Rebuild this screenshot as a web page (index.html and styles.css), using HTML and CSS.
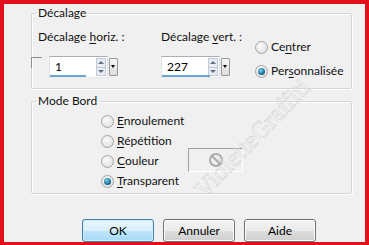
FILE: index.html
```html
<!DOCTYPE html>
<html lang="fr">
<head>
    <meta charset="UTF-8">
    <title>Décalage</title>
    <link rel="stylesheet" href="styles.css">
</head>
<body>
    <div class="dialog">
        <fieldset class="group group-offset">
            <legend>Décalage</legend>
            <div class="offset-row">
                <div class="field field-h">
                    <div class="field-label">Décalage <u>h</u>oriz. :</div>
                    <div class="field-input">
                        <span class="check"></span>
                        <div class="spin">
                            <div class="spin-box">
                                <span class="spin-value">1</span>
                                <span class="arrows"><span class="arrow up"></span><span class="arrow down"></span></span>
                                <span class="level" style="width: 36px"></span>
                            </div>
                            <span class="drop"></span>
                        </div>
                    </div>
                </div>
                <div class="field field-v">
                    <div class="field-label">Décalage <u>v</u>ert. :</div>
                    <div class="field-input">
                        <div class="spin">
                            <div class="spin-box">
                                <span class="spin-value">227</span>
                                <span class="arrows"><span class="arrow up"></span><span class="arrow down"></span></span>
                                <span class="level" style="width: 48px"></span>
                            </div>
                            <span class="drop"></span>
                        </div>
                    </div>
                </div>
                <div class="radios radios-pos">
                    <label class="radio"><span class="dot"></span><span>Ce<u>n</u>trer</span></label>
                    <label class="radio"><span class="dot on"></span><span>Per<u>s</u>onnalisée</span></label>
                </div>
            </div>
        </fieldset>

        <fieldset class="group group-mode">
            <legend>Mode Bord</legend>
            <div class="radios mode-list">
                <label class="radio"><span class="dot"></span><span><u>E</u>nroulement</span></label>
                <label class="radio"><span class="dot"></span><span><u>R</u>épétition</span></label>
                <div class="radio-row">
                    <label class="radio"><span class="dot"></span><span><u>C</u>ouleur</span></label>
                    <span class="swatch">
                        <svg width="18" height="18" viewBox="0 0 18 18">
                            <circle cx="9" cy="9" r="6" fill="none" stroke="#a9a9a9" stroke-width="2"/>
                            <line x1="5" y1="5" x2="13" y2="13" stroke="#a9a9a9" stroke-width="2"/>
                        </svg>
                    </span>
                </div>
                <label class="radio"><span class="dot on"></span><span><u>T</u>ransparent</span></label>
            </div>
        </fieldset>

        <div class="buttons">
            <button class="btn btn-default">OK</button>
            <button class="btn">Annuler</button>
            <button class="btn">Aide</button>
        </div>

        <span class="watermark">VioletteGraffiti</span>
    </div>
</body>
</html>
```

FILE: styles.css
```css
body {
    margin: 0;
    font-family: Lato, "Liberation Sans", sans-serif;
    font-size: 12px;
    line-height: 16px;
    color: #111;
}
.dialog {
    position: relative;
    width: 369px;
    height: 245px;
    box-sizing: border-box;
    border: 4px solid #e3101b;
    border-bottom-width: 3px;
    background: #f0f0f0;
    padding: 1px 13px 0 27px;
    overflow: hidden;
}
u {
    text-decoration-thickness: 1px;
    text-underline-offset: 2px;
}
.group {
    margin: 0;
    border: 1px solid #d5d5d5;
    border-radius: 2px;
    box-shadow: 1px 1px 0 #fff, inset 1px 1px 0 #fff;
    min-width: 0;
}
.group legend {
    padding: 0 2px;
    margin-left: -2px;
    line-height: 16px;
}
.group-offset {
    padding: 8px 0 9px 6px;
}
.offset-row {
    display: flex;
}
.field-h {
    width: 123px;
}
.field-v {
    width: 94px;
}
.field-label {
    height: 16px;
}
.field-input {
    display: flex;
    margin-top: 11px;
}
.check {
    width: 10px;
    height: 10px;
    margin: 1px 7px 0 -7px;
    border-top: 1px solid #8f8f8f;
    border-left: 1px solid #8f8f8f;
}
.spin {
    display: flex;
    align-items: center;
}
.spin-box {
    position: relative;
    display: flex;
    align-items: center;
    width: 59px;
    height: 22px;
    box-sizing: border-box;
    padding: 0 1px 0 5px;
    background: #fff;
    border: 1px solid #abadb3;
    border-color: #abadb3 #dbdfe6 #e3e9ef #e2e3ea;
}
.spin-value {
    flex: 1;
    color: #000;
}
.arrows {
    display: flex;
    flex-direction: column;
    width: 10px;
    height: 18px;
    border: 1px solid #c3cad4;
    box-sizing: border-box;
    background: #e9edf2;
}
.arrow {
    flex: 1;
    position: relative;
}
.arrow.up {
    border-bottom: 1px solid #c3cad4;
}
.arrow::after {
    content: "";
    position: absolute;
    left: 1px;
    border-left: 3px solid transparent;
    border-right: 3px solid transparent;
}
.arrow.up::after {
    top: 2px;
    border-bottom: 3px solid #5c6e8c;
}
.arrow.down::after {
    top: 2px;
    border-top: 3px solid #5c6e8c;
}
.level {
    position: absolute;
    left: 0;
    bottom: 0;
    height: 2px;
    background: #6ea5cf;
}
.drop {
    position: relative;
    width: 9px;
    height: 18px;
    margin-left: 1px;
    box-sizing: border-box;
    border: 1px solid #9c9c9c;
    border-radius: 1px;
    background: linear-gradient(#f7f7f7, #dcdcdc);
}
.drop::after {
    content: "";
    position: absolute;
    left: 1px;
    top: 6px;
    border-left: 2.5px solid transparent;
    border-right: 2.5px solid transparent;
    border-top: 3px solid #000;
}
.radios {
    display: flex;
    flex-direction: column;
}
.radios-pos {
    margin-top: 10px;
    gap: 8px;
}
.radio {
    display: flex;
    align-items: center;
    gap: 3px;
    height: 16px;
    white-space: nowrap;
}
.dot {
    position: relative;
    width: 13px;
    height: 13px;
    box-sizing: border-box;
    border-radius: 50%;
    border: 1px solid #a3a3a3;
    background: radial-gradient(circle at 40% 35%, #fafafa, #dadada);
}
.dot.on::after {
    content: "";
    position: absolute;
    left: 2px;
    top: 2px;
    width: 7px;
    height: 7px;
    border-radius: 50%;
    background: radial-gradient(circle at 40% 35%, #7ad0ef, #1b6f9a 60%, #0d4465);
}
.group-mode {
    margin-top: 4px;
    padding: 4px 0 4px 6px;
}
.mode-list {
    width: 142px;
    margin-left: 63px;
    gap: 4px;
}
.radio-row {
    display: flex;
    align-items: center;
    justify-content: space-between;
}
.swatch {
    display: flex;
    align-items: center;
    justify-content: center;
    width: 55px;
    height: 24px;
    box-sizing: border-box;
    margin: -5px 0 -3px;
    border: 1px solid;
    border-color: #a0a0a0 #fff #fff #a0a0a0;
}
.buttons {
    display: flex;
    gap: 9px;
    margin-top: 25px;
    padding-left: 51px;
}
.btn {
    width: 72px;
    height: 23px;
    padding: 0;
    font: inherit;
    color: #000;
    border: 1px solid #707070;
    border-radius: 3px;
    background: linear-gradient(#f2f2f2 0%, #ebebeb 50%, #dddddd 51%, #cfcfcf 100%);
    box-shadow: inset 0 0 0 1px #fcfcfc;
}
.btn-default {
    border-color: #3c7fb1;
    background: linear-gradient(#eaf6fd 0%, #d9f0fc 50%, #bee6fd 51%, #a7d9f5 100%);
    box-shadow: inset 0 0 0 1px #d4effb;
}
.watermark {
    position: absolute;
    left: 248px;
    top: 134px;
    transform: translate(-50%, -50%) rotate(-46deg);
    font-family: "Liberation Serif", serif;
    font-size: 25px;
    line-height: 25px;
    white-space: nowrap;
    color: rgba(255, 255, 255, 0.3);
    -webkit-text-stroke: 0.5px #d0d0d0;
    pointer-events: none;
}
```
